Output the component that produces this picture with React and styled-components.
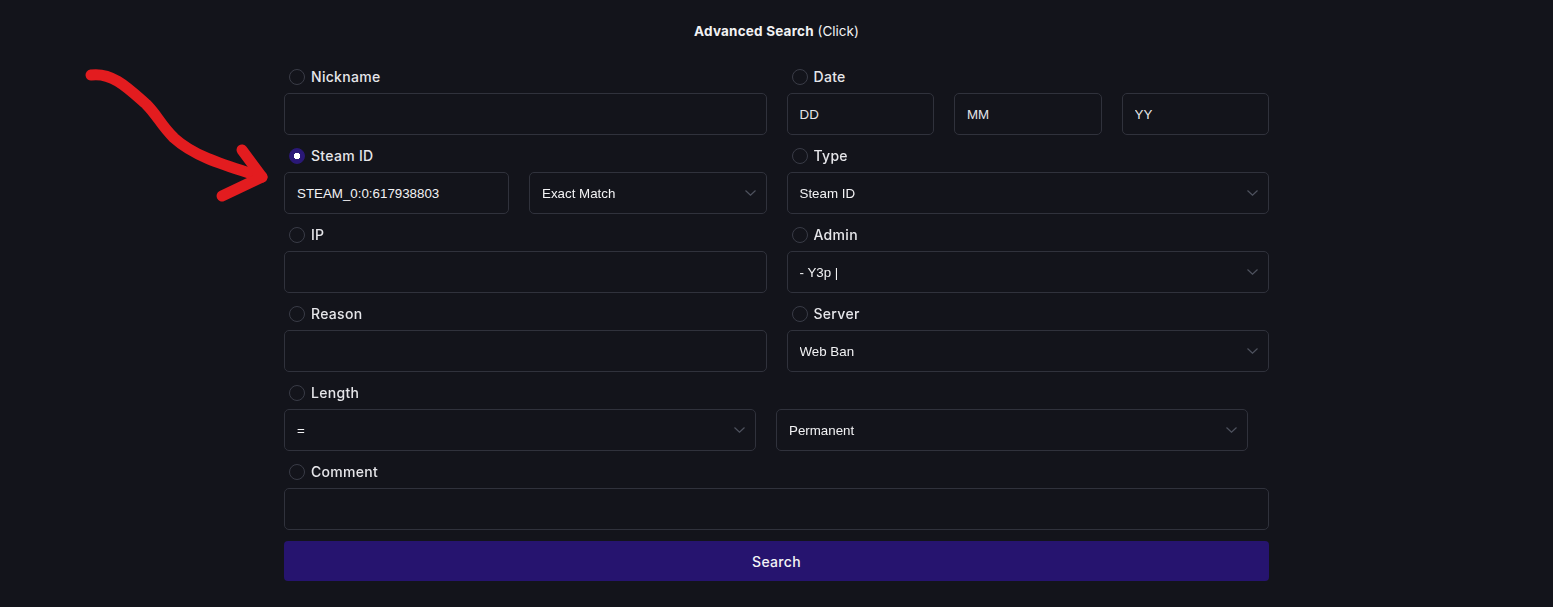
import React from 'react';
import styled, { createGlobalStyle } from 'styled-components';

const GlobalStyle = createGlobalStyle`
  html, body {
    margin: 0;
    background: #13141b;
  }
  body {
    font-family: "Inter", "Liberation Sans", sans-serif;
    color: #e6e6ea;
  }
`;

const Page = styled.div`
  position: relative;
  min-height: 607px;
  padding-top: 21px;
  box-sizing: border-box;
`;

const Title = styled.div`
  text-align: center;
  font-size: 13.5px;
  line-height: 20px;
  color: #f2f2f4;
  b {
    font-weight: 700;
    letter-spacing: 0.2px;
  }
`;

const Form = styled.form`
  width: 985px;
  margin: 25px auto 0;
  display: flex;
  flex-direction: column;
  gap: 10px;
`;

const Grid = styled.div`
  display: grid;
  grid-template-columns: 1fr 1fr;
  column-gap: 20px;
  row-gap: 10px;
`;

const Field = styled.div`
  display: flex;
  flex-direction: column;
  gap: 6px;
`;

const Label = styled.label`
  display: flex;
  align-items: center;
  gap: 6px;
  height: 21px;
  padding-left: 5px;
  font-size: 14px;
  font-weight: 500;
  letter-spacing: 0.3px;
  color: #e6e6ea;
`;

const Radio = styled.input.attrs({ type: 'radio' })`
  appearance: none;
  margin: 0;
  width: 16px;
  height: 16px;
  border-radius: 50%;
  border: 1px solid #3a3c47;
  background: transparent;
  box-sizing: border-box;
  &:checked {
    border-color: #2a1877;
    background: radial-gradient(circle, #ffffff 0 3px, #2a1877 3.5px);
  }
`;

const Controls = styled.div`
  display: grid;
  grid-template-columns: ${p => p.$cols || '1fr'};
  gap: 20px;
  width: ${p => p.$width || 'auto'};
`;

const Input = styled.input`
  height: 42px;
  width: 100%;
  box-sizing: border-box;
  padding: 0 12px;
  background: #13141b;
  border: 1px solid #30323c;
  border-radius: 5px;
  color: #f2f2f4;
  caret-color: #ffffff;
  font-family: "Liberation Sans", Arial, sans-serif;
  font-size: 13.333px;
  outline: none;
  &::placeholder {
    color: #e4e4e8;
    opacity: 1;
  }
`;

const SelectWrap = styled.div`
  position: relative;
`;

const Select = styled.select`
  appearance: none;
  height: 42px;
  width: 100%;
  box-sizing: border-box;
  padding: 0 30px 0 12px;
  background: #13141b;
  border: 1px solid #30323c;
  border-radius: 5px;
  color: #f2f2f4;
  font-family: "Liberation Sans", Arial, sans-serif;
  font-size: 13.333px;
  outline: none;
`;

const Chevron = styled.svg`
  position: absolute;
  right: 11px;
  top: 50%;
  margin-top: -3px;
  pointer-events: none;
`;

const SearchButton = styled.button`
  height: 40px;
  margin-top: 1px;
  border: none;
  border-radius: 4px;
  background: #26146f;
  color: #f4f4f6;
  font-family: "Inter", "Liberation Sans", sans-serif;
  font-size: 14px;
  font-weight: 500;
  letter-spacing: 0.3px;
  cursor: pointer;
`;

const Arrow = styled.svg`
  position: absolute;
  left: 0;
  top: 0;
  pointer-events: none;
`;

const Dropdown = ({ value, options }) => (
  <SelectWrap>
    <Select defaultValue={value}>
      {options.map(o => <option key={o}>{o}</option>)}
    </Select>
    <Chevron width="11" height="6" viewBox="0 0 11 6">
      <path d="M0.5 0.5 L5.5 5.2 L10.5 0.5" fill="none" stroke="#4e525e" strokeWidth="1.2" />
    </Chevron>
  </SelectWrap>
);

const FieldLabel = ({ children, checked }) => (
  <Label>
    <Radio name="type" defaultChecked={checked} />
    {children}
  </Label>
);

const App = () => (
  <Page>
    <GlobalStyle />
    <Title><b>Advanced Search</b> (Click)</Title>
    <Form onSubmit={e => e.preventDefault()}>
      <Grid>
        <Field>
          <FieldLabel>Nickname</FieldLabel>
          <Input type="text" />
        </Field>
        <Field>
          <FieldLabel>Date</FieldLabel>
          <Controls $cols="1fr 1fr 1fr">
            <Input placeholder="DD" />
            <Input placeholder="MM" />
            <Input placeholder="YY" />
          </Controls>
        </Field>

        <Field>
          <FieldLabel checked>Steam ID</FieldLabel>
          <Controls $cols="225px 1fr">
            <Input type="text" defaultValue="STEAM_0:0:617938803" autoFocus />
            <Dropdown value="Exact Match" options={['Exact Match', 'Partial Match']} />
          </Controls>
        </Field>
        <Field>
          <FieldLabel>Type</FieldLabel>
          <Dropdown value="Steam ID" options={['Steam ID', 'Steam Community ID']} />
        </Field>

        <Field>
          <FieldLabel>IP</FieldLabel>
          <Input type="text" />
        </Field>
        <Field>
          <FieldLabel>Admin</FieldLabel>
          <Dropdown value="- Y3p |" options={['- Y3p |']} />
        </Field>

        <Field>
          <FieldLabel>Reason</FieldLabel>
          <Input type="text" />
        </Field>
        <Field>
          <FieldLabel>Server</FieldLabel>
          <Dropdown value="Web Ban" options={['Web Ban']} />
        </Field>
      </Grid>

      <Field>
        <FieldLabel>Length</FieldLabel>
        <Controls $cols="1fr 1fr" $width="964px">
          <Dropdown value="=" options={['=', '>', '<', '>=', '<=']} />
          <Dropdown value="Permanent" options={['Permanent', '1 day', '1 week']} />
        </Controls>
      </Field>

      <Field>
        <FieldLabel>Comment</FieldLabel>
        <Input type="text" />
      </Field>

      <SearchButton type="submit">Search</SearchButton>
    </Form>

    <Arrow width="300" height="220" viewBox="0 0 300 220">
      <g fill="none" stroke="#e31c1f" strokeWidth="11" strokeLinecap="round" strokeLinejoin="round">
        <path d="M91 75 C112 72 128 88 146 104 C158 116 160 124 174 138 C196 158 228 166 262 177" />
        <path d="M242 150 L262 177 L222 196" />
      </g>
    </Arrow>
  </Page>
);

export default App;
